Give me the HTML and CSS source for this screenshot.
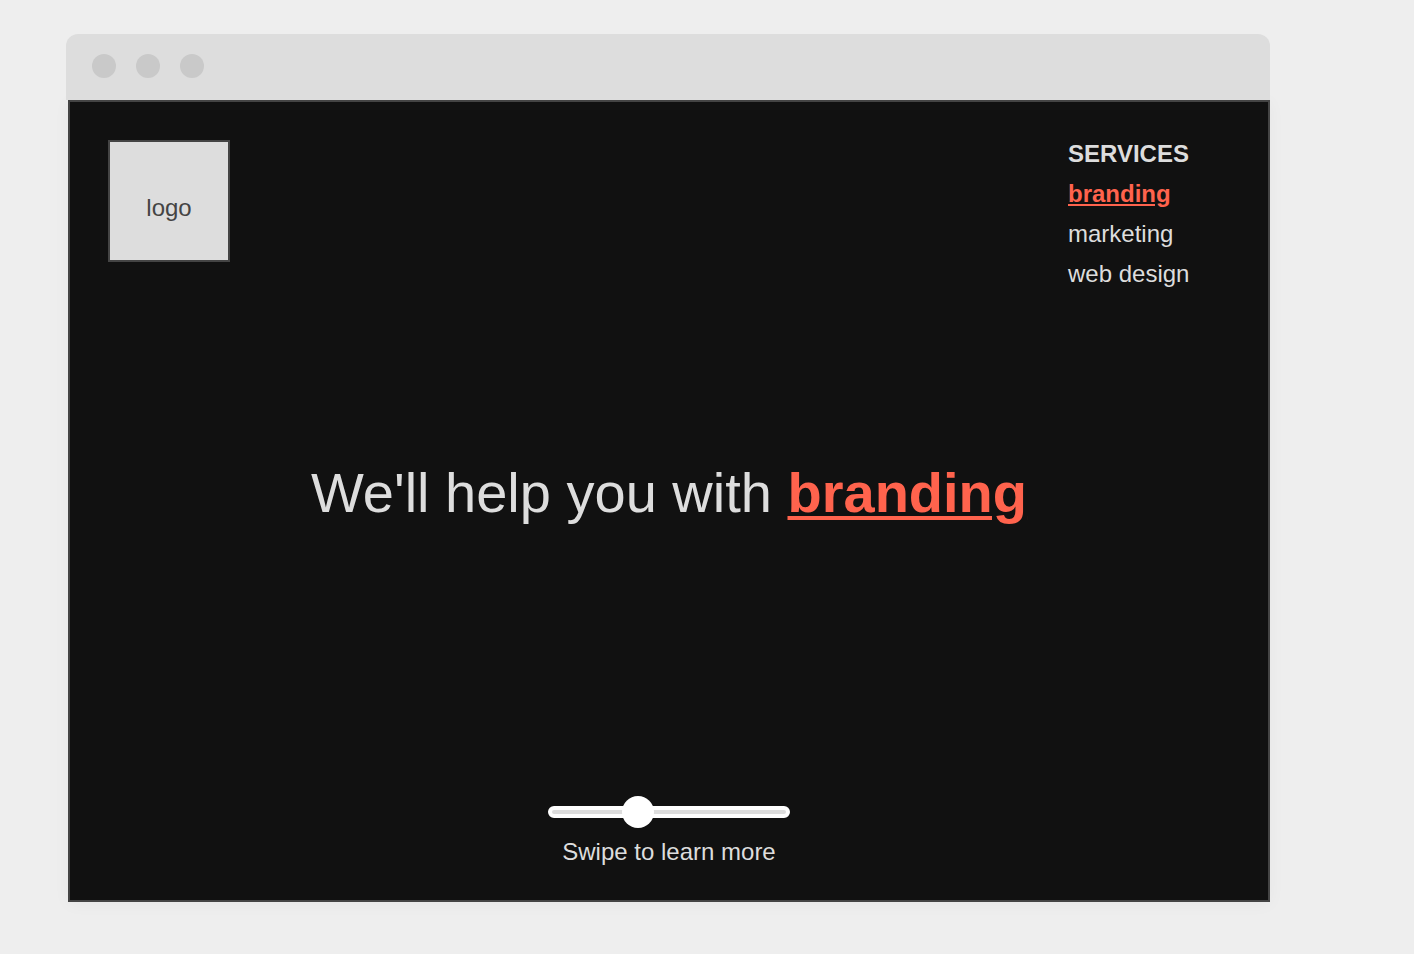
FILE: index.html
```html
<!DOCTYPE html>
<html lang="en">
<head>
  <meta charset="utf-8">
  <meta name="viewport" content="width=device-width, initial-scale=1">
  <title>Services</title>
  <link rel="stylesheet" href="styles.css">
</head>
<body>
  <div class="window">
    <div class="window-bar">
      <span class="dot"></span>
      <span class="dot"></span>
      <span class="dot"></span>
    </div>
    <div class="screen">
      <header class="top">
        <div class="logo">logo</div>
        <nav class="services" aria-labelledby="services-title">
          <h2 class="services-title" id="services-title">SERVICES</h2>
          <ul class="services-list">
            <li><a class="service active" href="#branding">branding</a></li>
            <li><a class="service" href="#marketing">marketing</a></li>
            <li><a class="service" href="#web-design">web design</a></li>
          </ul>
        </nav>
      </header>
      <h1 class="headline">We'll help you with <a class="active" href="#branding">branding</a></h1>
      <div class="swipe">
        <input class="slider" id="swipe" type="range" min="0" max="26" value="9">
        <label class="swipe-label" for="swipe">Swipe to learn more</label>
      </div>
    </div>
  </div>
</body>
</html>
```

FILE: styles.css
```css
* {
  box-sizing: border-box;
}

body {
  display: flex;
  min-height: 100vh;
  margin: 0;
  padding: 34px 144px 52px 66px;
  background: #eee;
  color: #ddd;
  font-family: "Liberation Sans", Arial, sans-serif;
  font-size: 24px;
  line-height: 40px;
}

.window {
  display: flex;
  flex: 1;
  flex-direction: column;
}

.window-bar {
  z-index: 1;
  display: flex;
  gap: 20px;
  padding: 20px 26px 22px;
  border-radius: 12px 12px 0 0;
  background: #ddd;
}

.dot {
  width: 24px;
  height: 24px;
  border-radius: 50%;
  background: #c9c9c9;
}

.screen {
  display: grid;
  flex: 1;
  grid-template-rows: auto 1fr auto;
  margin-left: 2px;
  border: 2px solid #444;
  background: #111;
  box-shadow: 0 2px 16px rgba(0, 0, 0, 0.04);
}

.top {
  display: flex;
  justify-content: space-between;
  padding: 32px 76px 0 38px;
}

.logo {
  width: 122px;
  height: 122px;
  margin-top: 6px;
  padding-top: 46px;
  border: 2px solid #444;
  background: #ddd;
  color: #444;
  text-align: center;
}

.services {
  min-width: 124px;
}

.services-title {
  margin: 0;
  font-size: 24px;
}

.services-list {
  margin: 0;
  padding: 0;
  list-style: none;
}

.service {
  color: #ddd;
  text-decoration: none;
}

.active {
  color: #ff634d;
  font-weight: bold;
  text-decoration: underline;
}

.headline {
  align-self: center;
  margin: 0;
  padding-bottom: 104px;
  font-size: 56px;
  font-weight: normal;
  line-height: 64px;
  text-align: center;
}

.headline .active {
  text-decoration-thickness: 4px;
  text-underline-offset: 4px;
}

.swipe {
  display: flex;
  flex-direction: column;
  align-items: center;
  gap: 4px;
  padding-bottom: 28px;
}

.slider {
  width: 242px;
  height: 32px;
  margin: 0;
  background: none;
  appearance: none;
}

.slider::-webkit-slider-runnable-track {
  height: 12px;
  border: 4px solid #fff;
  border-radius: 6px;
  background: #ddd;
}

.slider::-webkit-slider-thumb {
  width: 32px;
  height: 32px;
  margin-top: -14px;
  border: 0;
  border-radius: 50%;
  background: #fff;
  appearance: none;
}
```
